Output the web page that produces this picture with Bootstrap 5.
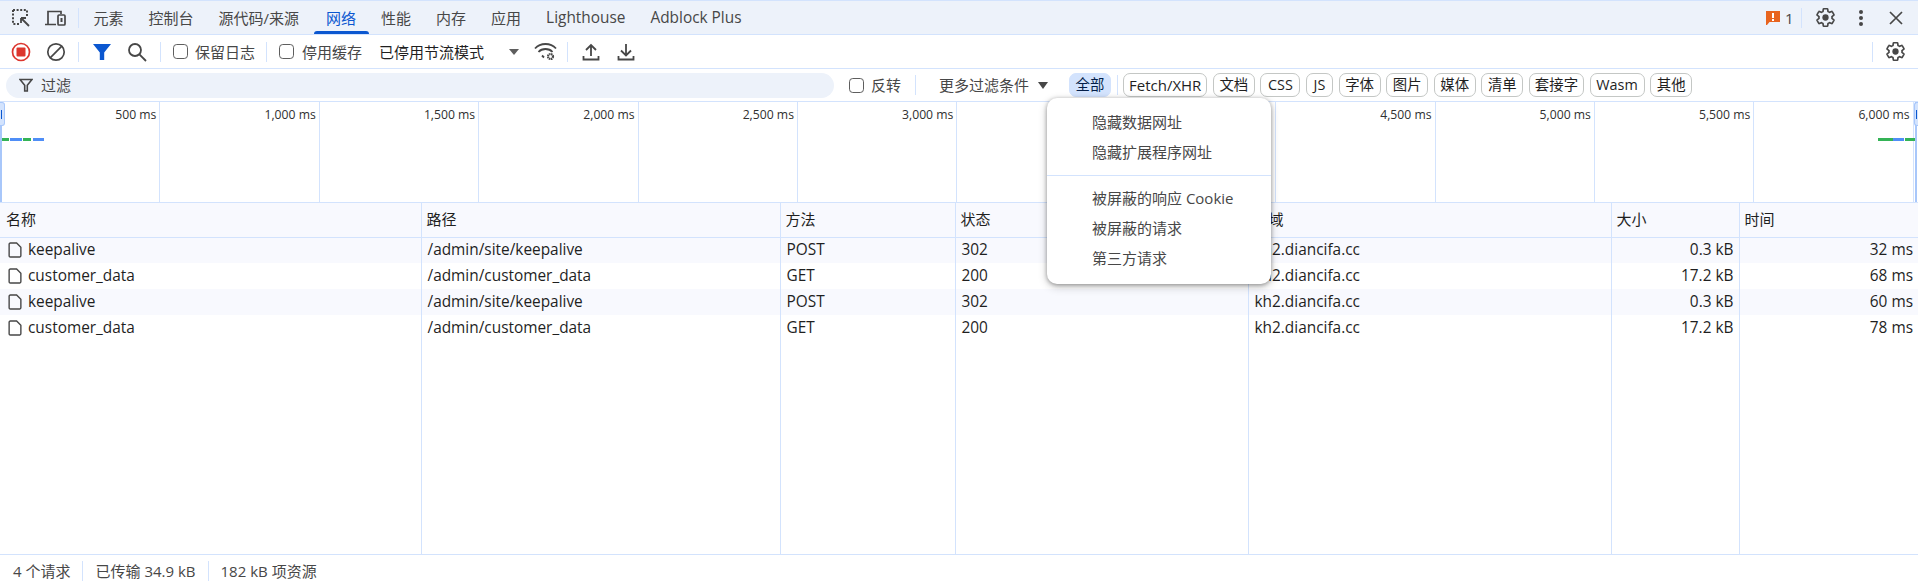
<!DOCTYPE html>
<html lang="zh-CN">
<head>
<meta charset="utf-8">
<title>网络</title>
<link href="https://cdn.jsdelivr.net/npm/bootstrap@5.3.0/dist/css/bootstrap.min.css" rel="stylesheet">
<style>
html,body{height:586px;overflow:hidden}
body{font-family:"Open Sans","Noto Sans CJK SC",sans-serif;font-size:15px;line-height:20px;color:#1f1f1f;background:#fff}
.dt-page{width:1918px;height:586px;position:relative;display:flex;flex-direction:column}
.dt-tabs{height:35px;flex:none;background:#edf2fa;border-top:1px solid #d3e3fd;border-bottom:1px solid #d3e3fd;padding-left:3px}
.dt-tab{height:33px;padding:0 12.5px;color:#474747;white-space:nowrap;position:relative;display:flex;align-items:center}
.dt-tab.on{color:#0b57d0}
.dt-tab.wide{padding-right:14.5px}
.dt-tab.latin{font-size:15.4px}
.dt-tab.on::after{content:"";position:absolute;left:0;right:0;bottom:0;height:3px;background:#0b57d0;border-radius:3px 3px 0 0}
.dt-bar{height:34px;flex:none;border-bottom:1px solid #d3e3fd;padding-left:3px;color:#474747;white-space:nowrap}
.dt-filter{height:33px;flex:none;border-bottom:1px solid #d3e3fd;white-space:nowrap;color:#474747}
.dt-ib{width:35px;height:33px;flex:none;display:flex;align-items:center;justify-content:center}
.dt-ib svg{display:block}
.dt-sep{width:1px;height:20px;background:#d3e3fd;flex:none}
.dt-check{width:15px;height:15px;margin:0;flex:none;border:1.5px solid #5e5e5e;border-radius:3px;background-color:#fff}
.dt-input{width:828px;height:25px;margin-left:6px;background:#edf2fa;border-radius:12.5px;flex:none;padding-left:13px;gap:8px}
.dt-chip{height:24px;padding:0 6px;border:1px solid #c4c7c5;border-radius:7px;font-size:14.4px;color:#1f1f1f;line-height:22px;display:flex;align-items:center;justify-content:center;flex:none}
.dt-chip.on{background:#d3e3fd;border-color:#d3e3fd;color:#041e49}
.dt-chip.latin{font-size:15px}
.dt-over{height:101px;flex:none;border-bottom:1px solid #d3e3fd;position:relative;padding-left:1px}
.dt-tick{flex:none;width:159.4px;border-right:1px solid #d3e3fd;font-size:12.2px;color:#303030;text-align:right;padding:3px 3px 0 0;line-height:20px;white-space:nowrap}
.dt-strip{position:absolute;top:36px;height:3px}
.dt-handle{position:absolute;top:0;width:5px;height:24px;background:#d3e3fd;border:1px solid #a8c7fa}
.dt-grid{table-layout:fixed;width:1918px;border-collapse:collapse;flex:none}
.dt-grid th,.dt-grid td{padding:0 5px 0 6px;border-right:1px solid #d3e3fd;white-space:nowrap;overflow:hidden;font-weight:400;vertical-align:middle}
.dt-grid th:last-child,.dt-grid td:last-child{border-right:0}
.dt-grid thead th{height:34px;padding-left:5px;padding-bottom:2px;background:#f8f9fe;border-bottom:1px solid #d3e3fd}
.dt-grid thead th:first-child{padding-left:6px}
.dt-grid tbody td{height:26px;font-size:15.4px}
.dt-grid tbody tr.alt td{background:#f8f9fe}
.dt-grid td.dt-fill{height:213px}
.dt-file{display:inline-block;vertical-align:-3px;margin:0 6px 0 2px}
.dt-status{height:32px;flex:none;border-top:1px solid #d3e3fd;color:#474747;padding-left:13px;white-space:nowrap}
.dt-status .dt-sep{margin:0 12px}
.dt-menu{position:absolute;left:1047px;top:98px;width:224px;height:186px;background:#fff;border-radius:10px;box-shadow:0 1px 4px rgba(0,0,0,.35),0 3px 10px rgba(0,0,0,.2);padding:10px 0;color:#474747;z-index:5}
.dt-item{height:30px;padding:0 0 2px 45px;display:flex;align-items:center;white-space:nowrap}
.dt-rule{height:1px;background:#d3e3fd;margin:7px 0 8px}
</style>
</head>
<body>
<div class="dt-page">

<div class="dt-tabs d-flex align-items-center">
  <span class="dt-ib"><svg width="20" height="20" viewBox="0 0 20 20" fill="none" stroke="#474747"><path d="M2 2h14v6M2 2v14h7" stroke-width="2" stroke-dasharray="2 1.6"/><path d="M10 10l8 8M10 10h5M10 10v5" stroke-width="1.8"/></svg></span>
  <span class="dt-ib"><svg width="22" height="18" viewBox="0 0 22 18" fill="none" stroke="#474747" stroke-width="1.7"><path d="M3 15V2.500h13V5M0 15.500h11"/><rect x="13" y="6" width="7" height="10" rx="1"/><rect x="15.500" y="9" width="2" height="4" fill="#474747" stroke="none"/></svg></span>
  <span class="dt-sep" style="margin:0 2px 0 5px"></span>
  <div class="dt-tab">元素</div>
  <div class="dt-tab">控制台</div>
  <div class="dt-tab wide">源代码/来源</div>
  <div class="dt-tab on">网络</div>
  <div class="dt-tab">性能</div>
  <div class="dt-tab">内存</div>
  <div class="dt-tab">应用</div>
  <div class="dt-tab latin">Lighthouse</div>
  <div class="dt-tab latin">Adblock Plus</div>
  <div class="ms-auto d-flex align-items-center">
    <svg width="15" height="16" viewBox="0 0 15 16"><path d="M0 1h14v11H3.500L1 15H0z" fill="#e8641f"/><path d="M6 3h2v5H6zM6 9h2v2H6z" fill="#fff"/></svg>
    <span style="color:#474747;width:19px;margin-left:1px;padding-left:3px">1</span>
    <span class="dt-sep" style="margin-right:6px"></span>
    <span class="dt-ib"><svg width="21" height="21" viewBox="0 0 24 24" fill="none" stroke="#474747" stroke-width="1.900"><path d="M19.430 12.980c.04-.32.07-.64.07-.98s-.03-.66-.07-.98l2.110-1.650c.19-.15.24-.42.12-.64l-2-3.460c-.12-.22-.39-.3-.61-.22l-2.490 1c-.52-.4-1.080-.73-1.690-.98l-.38-2.650C14.460 2.180 14.250 2 14 2h-4c-.25 0-.46.18-.49.42l-.38 2.650c-.61.25-1.170.59-1.690.98l-2.490-1c-.23-.09-.49 0-.61.22l-2 3.460c-.13.22-.07.49.12.64l2.110 1.650c-.04.32-.07.65-.07.98s.03.66.07.98l-2.110 1.650c-.19.15-.24.42-.12.64l2 3.460c.12.22.39.3.61.22l2.490-1c.52.4 1.080.73 1.690.98l.38 2.650c.03.24.24.42.49.42h4c.25 0 .46-.18.49-.42l.38-2.650c.61-.25 1.170-.59 1.690-.98l2.490 1c.23.09.49 0 .61-.22l2-3.460c.12-.22.07-.49-.12-.64l-2.110-1.650z"/><circle cx="12" cy="12" r="3.600" fill="#474747" stroke="none"/></svg></span>
    <span class="dt-ib"><svg width="6" height="18" viewBox="0 0 6 18" fill="#474747"><circle cx="3" cy="3" r="2"/><circle cx="3" cy="9" r="2"/><circle cx="3" cy="15" r="2"/></svg></span>
    <span class="dt-ib" style="margin-right:5px"><svg width="14" height="14" viewBox="0 0 14 14" stroke="#474747" stroke-width="1.700"><path d="M1 1l12 12M13 1L1 13"/></svg></span>
  </div>
</div>

<div class="dt-bar d-flex align-items-center">
  <span class="dt-ib"><svg width="20" height="20" viewBox="0 0 20 20"><circle cx="10" cy="10" r="8.500" fill="none" stroke="#dc362e" stroke-width="1.700"/><rect x="5.500" y="5.500" width="9" height="9" rx="1" fill="#dc362e"/></svg></span>
  <span class="dt-ib"><svg width="20" height="20" viewBox="0 0 20 20" fill="none" stroke="#474747" stroke-width="1.700"><circle cx="10" cy="10" r="8.200"/><path d="M4.200 15.800L15.800 4.200"/></svg></span>
  <span class="dt-sep" style="margin:0 5px 0 5px"></span>
  <span class="dt-ib"><svg width="18" height="18" viewBox="0 0 18 18" fill="#0b57d0"><path d="M0 1h18l-6.800 8.500V17H6.800V9.500z"/></svg></span>
  <span class="dt-ib"><svg width="20" height="20" viewBox="0 0 20 20" fill="none" stroke="#474747" stroke-width="1.800"><circle cx="8" cy="8" r="6"/><path d="M12.400 12.400l6.600 6.600"/></svg></span>
  <span class="dt-sep" style="margin:0 12px 0 6px"></span>
  <input type="checkbox" class="form-check-input dt-check" aria-label="保留日志">
  <span style="margin-right:11px;margin-left:7px">保留日志</span>
  <span class="dt-sep" style="margin-right:12px"></span>
  <input type="checkbox" class="form-check-input dt-check" aria-label="停用缓存">
  <span style="margin-left:8px;width:77px;flex:none">停用缓存</span>
  <span style="color:#1f1f1f;width:130px;flex:none">已停用节流模式</span>
  <svg width="10" height="6" viewBox="0 0 10 6" fill="#5e5e5e"><path d="M0 0h10L5 6z"/></svg>
  <svg style="margin-left:15px" width="23" height="19" viewBox="0 0 23 19" fill="none" stroke="#474747" stroke-width="1.800"><path d="M1 6.500c5.500-6 15.500-6 21 0M4.500 10c3.500-4 10.500-4 14 0M8 13.500l2 2"/><circle cx="16.500" cy="14.500" r="2.500" stroke-width="2.200" stroke-dasharray="1.500 .5"/></svg>
  <span class="dt-sep" style="margin:0 5px 0 10px"></span>
  <span class="dt-ib"><svg width="18" height="18" viewBox="0 0 18 18" fill="none" stroke="#474747" stroke-width="1.800"><path d="M9 13V2M4 7l5-5 5 5M1.500 13v3.500h15V13"/></svg></span>
  <span class="dt-ib"><svg width="18" height="18" viewBox="0 0 18 18" fill="none" stroke="#474747" stroke-width="1.800"><path d="M9 1v11M4 7.500l5 5 5-5M1.500 13v3.500h15V13"/></svg></span>
  <span class="dt-sep ms-auto" style="margin-right:5px"></span>
  <span class="dt-ib" style="margin-right:5px"><svg width="21" height="21" viewBox="0 0 24 24" fill="none" stroke="#474747" stroke-width="1.900"><path d="M19.430 12.980c.04-.32.07-.64.07-.98s-.03-.66-.07-.98l2.110-1.650c.19-.15.24-.42.12-.64l-2-3.460c-.12-.22-.39-.3-.61-.22l-2.490 1c-.52-.4-1.080-.73-1.690-.98l-.38-2.650C14.460 2.180 14.250 2 14 2h-4c-.25 0-.46.18-.49.42l-.38 2.650c-.61.25-1.170.59-1.690.98l-2.490-1c-.23-.09-.49 0-.61.22l-2 3.460c-.13.22-.07.49.12.64l2.110 1.650c-.04.32-.07.65-.07.98s.03.66.07.98l-2.110 1.650c-.19.15-.24.42-.12.64l2 3.460c.12.22.39.3.61.22l2.490-1c.52.4 1.080.73 1.690.98l.38 2.650c.03.24.24.42.49.42h4c.25 0 .46-.18.49-.42l.38-2.650c.61-.25 1.170-.59 1.690-.98l2.490 1c.23.09.49 0 .61-.22l2-3.460c.12-.22.07-.49-.12-.64l-2.110-1.650z"/><circle cx="12" cy="12" r="3.600" fill="#474747" stroke="none"/></svg></span>
</div>

<div class="dt-filter d-flex align-items-center">
  <div class="dt-input d-flex align-items-center">
    <svg width="14" height="14" viewBox="0 0 14 14" fill="none" stroke="#474747" stroke-width="1.600"><path d="M1 1.500h12L8.300 7.200V13H5.700V7.200z"/></svg>
    <span>过滤</span>
  </div>
  <input type="checkbox" class="form-check-input dt-check" style="margin-left:15px" aria-label="反转">
  <span style="margin-left:7px;width:44px;flex:none">反转</span>
  <span class="dt-sep"></span>
  <span style="margin-left:23px;width:99px;flex:none">更多过滤条件</span>
  <svg width="10" height="7" viewBox="0 0 10 7" fill="#474747"><path d="M0 0h10L5 7z"/></svg>
  <div class="d-flex align-items-center" style="margin-left:21px;gap:5.600px">
    <span class="dt-chip on" style="width:42px">全部</span>
    <span class="dt-sep"></span>
    <span class="dt-chip latin" style="width:84px">Fetch/XHR</span>
    <span class="dt-chip" style="width:42px">文档</span>
    <span class="dt-chip" style="width:40px">CSS</span>
    <span class="dt-chip" style="width:27px">JS</span>
    <span class="dt-chip" style="width:42px">字体</span>
    <span class="dt-chip" style="width:42px">图片</span>
    <span class="dt-chip" style="width:42px">媒体</span>
    <span class="dt-chip" style="width:42px">清单</span>
    <span class="dt-chip" style="width:55px">套接字</span>
    <span class="dt-chip" style="width:55px">Wasm</span>
    <span class="dt-chip" style="width:42px">其他</span>
  </div>
</div>

<div class="dt-over d-flex">
  <div class="dt-tick">500 ms</div><div class="dt-tick">1,000 ms</div><div class="dt-tick">1,500 ms</div><div class="dt-tick">2,000 ms</div><div class="dt-tick">2,500 ms</div><div class="dt-tick">3,000 ms</div><div class="dt-tick"></div><div class="dt-tick"></div><div class="dt-tick">4,500 ms</div><div class="dt-tick">5,000 ms</div><div class="dt-tick">5,500 ms</div><div class="dt-tick">6,000 ms</div>
  <span class="dt-strip" style="left:0;width:2px;top:0;height:100px;background:#a8c7fa"></span>
  <span class="dt-strip" style="left:2px;width:7px;background:#34b356"></span>
  <span class="dt-strip" style="left:10px;width:12px;background:#4f8ef7"></span>
  <span class="dt-strip" style="left:23px;width:8px;background:#34b356"></span>
  <span class="dt-strip" style="left:33px;width:11px;background:#4f8ef7"></span>
  <span class="dt-strip" style="left:1878px;width:15px;background:#34b356"></span>
  <span class="dt-strip" style="left:1893px;width:11px;background:#4f8ef7"></span>
  <span class="dt-strip" style="left:1905px;width:12px;background:#34b356"></span>
  <span class="dt-strip" style="left:1915px;width:2px;top:0;height:100px;background:#a8c7fa"></span>
  <span class="dt-handle" style="left:0;border-left:0;border-radius:0 3px 3px 0"></span>
  <span class="dt-strip" style="left:1px;top:8px;width:1px;height:9px;background:#0b57d0"></span>
  <span class="dt-handle" style="left:1914px;width:4px;border-right:0;border-radius:3px 0 0 3px"></span>
  <span class="dt-strip" style="left:1916px;top:8px;width:1px;height:9px;background:#0b57d0"></span>
</div>

<table class="dt-grid">
  <colgroup><col style="width:421px"><col style="width:359px"><col style="width:175px"><col style="width:293px"><col style="width:363px"><col style="width:128px"><col style="width:179px"></colgroup>
  <thead><tr><th>名称</th><th>路径</th><th>方法</th><th>状态</th><th>网域</th><th>大小</th><th>时间</th></tr></thead>
  <tbody>
    <tr class="alt"><td><svg class="dt-file" width="14" height="16" viewBox="0 0 13 15" fill="none" stroke="#474747" stroke-width="1.300"><path d="M1 2.200Q1 1 2.200 1H8l4 4v8q0 1-1 1H2.200Q1 14 1 13z"/></svg>keepalive</td><td>/admin/site/keepalive</td><td>POST</td><td>302</td><td>kh2.diancifa.cc</td><td class="text-end">0.3 kB</td><td class="text-end">32 ms</td></tr>
    <tr><td><svg class="dt-file" width="14" height="16" viewBox="0 0 13 15" fill="none" stroke="#474747" stroke-width="1.300"><path d="M1 2.200Q1 1 2.200 1H8l4 4v8q0 1-1 1H2.200Q1 14 1 13z"/></svg>customer_data</td><td>/admin/customer_data</td><td>GET</td><td>200</td><td>kh2.diancifa.cc</td><td class="text-end">17.2 kB</td><td class="text-end">68 ms</td></tr>
    <tr class="alt"><td><svg class="dt-file" width="14" height="16" viewBox="0 0 13 15" fill="none" stroke="#474747" stroke-width="1.300"><path d="M1 2.200Q1 1 2.200 1H8l4 4v8q0 1-1 1H2.200Q1 14 1 13z"/></svg>keepalive</td><td>/admin/site/keepalive</td><td>POST</td><td>302</td><td>kh2.diancifa.cc</td><td class="text-end">0.3 kB</td><td class="text-end">60 ms</td></tr>
    <tr><td><svg class="dt-file" width="14" height="16" viewBox="0 0 13 15" fill="none" stroke="#474747" stroke-width="1.300"><path d="M1 2.200Q1 1 2.200 1H8l4 4v8q0 1-1 1H2.200Q1 14 1 13z"/></svg>customer_data</td><td>/admin/customer_data</td><td>GET</td><td>200</td><td>kh2.diancifa.cc</td><td class="text-end">17.2 kB</td><td class="text-end">78 ms</td></tr>
    <tr><td class="dt-fill"></td><td class="dt-fill"></td><td class="dt-fill"></td><td class="dt-fill"></td><td class="dt-fill"></td><td class="dt-fill"></td><td class="dt-fill"></td></tr>
  </tbody>
</table>

<div class="dt-status d-flex align-items-center">
  <span>4 个请求</span><span class="dt-sep"></span><span>已传输 34.9 kB</span><span class="dt-sep"></span><span>182 kB 项资源</span>
</div>

<div class="dt-menu">
  <div class="dt-item">隐藏数据网址</div>
  <div class="dt-item">隐藏扩展程序网址</div>
  <div class="dt-rule"></div>
  <div class="dt-item">被屏蔽的响应 Cookie</div>
  <div class="dt-item">被屏蔽的请求</div>
  <div class="dt-item">第三方请求</div>
</div>
</div>
<script src="https://cdn.jsdelivr.net/npm/bootstrap@5.3.0/dist/js/bootstrap.bundle.min.js"></script>
</body>
</html>
